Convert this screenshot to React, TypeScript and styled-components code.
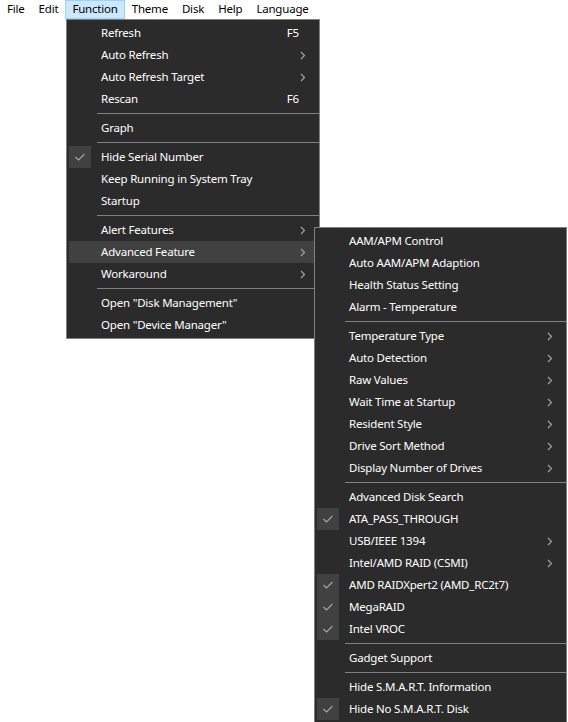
import React from "react";
import styled, { createGlobalStyle } from "styled-components";

const GlobalStyle = createGlobalStyle`
  html, body {
    margin: 0;
    padding: 0;
    background: #ffffff;
  }
  body {
    font-family: "Noto Sans", "Open Sans", sans-serif;
    font-size: 11.5px;
    letter-spacing: -0.2px;
    -webkit-font-smoothing: antialiased;
  }
`;

const Page = styled.div`
  position: relative;
  width: 568px;
  height: 722px;
  overflow: hidden;
  background: #ffffff;
`;

const MenuBar = styled.div`
  display: flex;
  align-items: stretch;
  height: 19px;
  background: #ffffff;
`;

const BarItem = styled.div<{ $active?: boolean }>`
  display: flex;
  align-items: center;
  padding: 0 6px 1px;
  border: 1px solid ${(p) => (p.$active ? "#99d1ff" : "transparent")};
  background: ${(p) => (p.$active ? "#cce8ff" : "transparent")};
  color: #000000;
  line-height: 16px;
  white-space: nowrap;
`;

const Menu = styled.div<{ $width: number }>`
  position: absolute;
  width: ${(p) => p.$width}px;
  box-sizing: border-box;
  background: #2b2b2b;
  border: 1px solid #808080;
  padding: 2px;
  display: flex;
  flex-direction: column;
  color: #ffffff;
  z-index: 1;
`;

const MainMenu = styled(Menu)`
  left: 66px;
  top: 19px;
`;

const SubMenu = styled(Menu)`
  left: calc(100% - 3px);
  top: -14px;
  z-index: 2;
`;

const Row = styled.div<{ $hover?: boolean }>`
  position: relative;
  display: flex;
  align-items: center;
  height: 22px;
  background: ${(p) => (p.$hover ? "#414141" : "transparent")};
  white-space: nowrap;
`;

const CheckBox = styled.div<{ $on?: boolean }>`
  width: 22px;
  height: 22px;
  flex: none;
  display: flex;
  align-items: center;
  justify-content: center;
  background: ${(p) => (p.$on ? "#414141" : "transparent")};
`;

const Label = styled.span`
  flex: 1;
  padding: 0 0 1px 10px;
  line-height: 21px;
`;

const Shortcut = styled.span`
  padding: 0 18px 1px 0;
  line-height: 21px;
`;

const ArrowSlot = styled.span`
  width: 20px;
  flex: none;
  display: flex;
  align-items: center;
  justify-content: flex-start;
  padding-left: 3px;
  box-sizing: border-box;
`;

const Separator = styled.div`
  height: 7px;
  display: flex;
  align-items: center;
  margin: 0 -2px 0 28px;
  &::after {
    content: "";
    flex: 1;
    height: 1px;
    background: #808080;
  }
`;

const Check = () => (
  <svg width="12" height="10" viewBox="0 0 12 10">
    <polyline
      points="1.5,5 4.5,8 10.5,2"
      fill="none"
      stroke="#a6a6a6"
      strokeWidth="1.1"
    />
  </svg>
);

const Chevron = () => (
  <svg width="6" height="9" viewBox="0 0 6 9">
    <polyline
      points="1,1 4.5,4.5 1,8"
      fill="none"
      stroke="#a6a6a6"
      strokeWidth="1.1"
    />
  </svg>
);

type Entry =
  | { sep: true }
  | {
      sep?: false;
      label: string;
      checked?: boolean;
      shortcut?: string;
      sub?: boolean;
      hover?: boolean;
    };

const MenuItem: React.FC<{ e: Exclude<Entry, { sep: true }>; children?: React.ReactNode }> = ({
  e,
  children,
}) => (
  <Row $hover={e.hover}>
    <CheckBox $on={e.checked}>{e.checked && <Check />}</CheckBox>
    <Label>{e.label}</Label>
    {e.shortcut && <Shortcut>{e.shortcut}</Shortcut>}
    {e.sub && (
      <ArrowSlot>
        <Chevron />
      </ArrowSlot>
    )}
    {children}
  </Row>
);

const mainEntries: Entry[] = [
  { label: "Refresh", shortcut: "F5" },
  { label: "Auto Refresh", sub: true },
  { label: "Auto Refresh Target", sub: true },
  { label: "Rescan", shortcut: "F6" },
  { sep: true },
  { label: "Graph" },
  { sep: true },
  { label: "Hide Serial Number", checked: true },
  { label: "Keep Running in System Tray" },
  { label: "Startup" },
  { sep: true },
  { label: "Alert Features", sub: true },
  { label: "Advanced Feature", sub: true, hover: true },
  { label: "Workaround", sub: true },
  { sep: true },
  { label: 'Open "Disk Management"' },
  { label: 'Open "Device Manager"' },
];

const subEntries: Entry[] = [
  { label: "AAM/APM Control" },
  { label: "Auto AAM/APM Adaption" },
  { label: "Health Status Setting" },
  { label: "Alarm - Temperature" },
  { sep: true },
  { label: "Temperature Type", sub: true },
  { label: "Auto Detection", sub: true },
  { label: "Raw Values", sub: true },
  { label: "Wait Time at Startup", sub: true },
  { label: "Resident Style", sub: true },
  { label: "Drive Sort Method", sub: true },
  { label: "Display Number of Drives", sub: true },
  { sep: true },
  { label: "Advanced Disk Search" },
  { label: "ATA_PASS_THROUGH", checked: true },
  { label: "USB/IEEE 1394", sub: true },
  { label: "Intel/AMD RAID (CSMI)", sub: true },
  { label: "AMD RAIDXpert2 (AMD_RC2t7)", checked: true },
  { label: "MegaRAID", checked: true },
  { label: "Intel VROC", checked: true },
  { sep: true },
  { label: "Gadget Support" },
  { sep: true },
  { label: "Hide S.M.A.R.T. Information" },
  { label: "Hide No S.M.A.R.T. Disk", checked: true },
];

const renderEntries = (entries: Entry[], withSub?: React.ReactNode) =>
  entries.map((e, i) =>
    e.sep ? (
      <Separator key={i} />
    ) : (
      <MenuItem key={i} e={e}>
        {e.hover ? withSub : null}
      </MenuItem>
    )
  );

const barItems = ["File", "Edit", "Function", "Theme", "Disk", "Help", "Language"];

export default function App() {
  const sub = <SubMenu $width={253}>{renderEntries(subEntries)}</SubMenu>;
  return (
    <>
      <GlobalStyle />
      <Page>
        <MenuBar>
          {barItems.map((b) => (
            <BarItem key={b} $active={b === "Function"}>
              {b}
            </BarItem>
          ))}
        </MenuBar>
        <MainMenu $width={254}>{renderEntries(mainEntries, sub)}</MainMenu>
      </Page>
    </>
  );
}
